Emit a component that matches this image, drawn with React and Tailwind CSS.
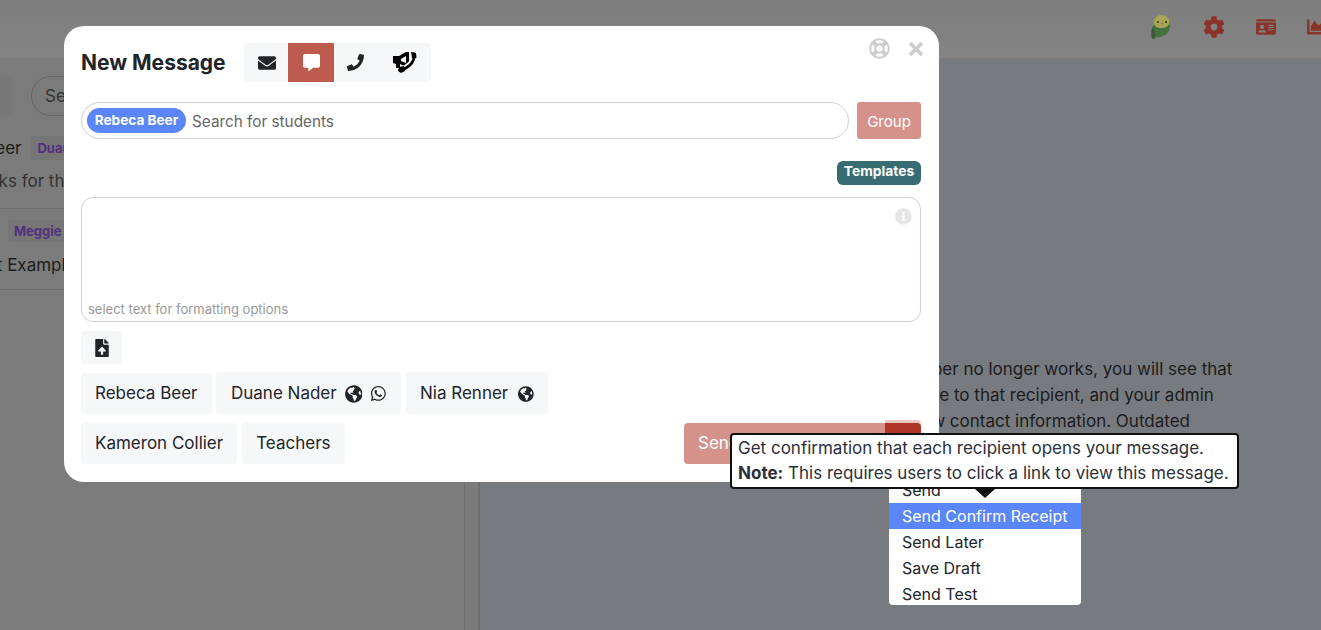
import { FaEnvelope, FaCommentAlt, FaPhone, FaRegLifeRing, FaTimes, FaInfoCircle, FaFileUpload, FaGlobeAmericas, FaWhatsapp, FaCog, FaIdCard, FaChartArea } from 'react-icons/fa';

function Chip({ children, className = '' }) {
  return (
    <div className={`flex h-[41px] items-center gap-2 whitespace-nowrap rounded-[4px] bg-[#f6f7f9] px-[14px] text-[17px] text-[#212529] ${className}`}>
      {children}
    </div>
  );
}

function Parakeet() {
  return (
    <svg width="22" height="26" viewBox="0 0 22 26">
      <path d="M5 10 C1 13 0 19 2 25 L4 25 L6 23 C13 24 20 19 20 12 L18 8 Z" fill="#47703f" />
      <path d="M3 14 C1 17 1 22 3 25 L5 24 C5 20 5 16 3 14 Z" fill="#3a5a36" />
      <path d="M4 9 C4 3 8 1 12 1 C17 1 20 5 19 10 C18 13 14 14 11 14 C7 14 4 12 4 9 Z" fill="#a8a654" />
      <circle cx="8" cy="8" r="1" fill="#2c2c20" />
      <circle cx="16" cy="8" r="1" fill="#2c2c20" />
      <path d="M11 9 h2 l-1 2 z" fill="#7e5a4c" />
    </svg>
  );
}

// megaphone with a phone handset across it
function BroadcastIcon() {
  return (
    <svg width="24" height="21" viewBox="0 0 24 21">
      <path d="M0 4 L6 4 L13 0 L16 0 L16 15 L13 15 L7 12 L7 16 L3 16 L3 12 L0 11 Z" fill="#000" />
      <path d="M8 7 L13 4 L13 11 L8 9 Z" fill="#f6f7f9" />
      <path d="M21 2 C22 9 17 15 8 18" fill="none" stroke="#f6f7f9" strokeWidth="6.5" />
      <path d="M21 2 C22 9 17 15 8 18" fill="none" stroke="#000" strokeWidth="3" strokeLinecap="round" />
      <path d="M18 0 L23 1 L23.5 6 L19 6 Z" fill="#000" />
      <path d="M6 15 L11 14 L12 19 L8 21 L5 19 Z" fill="#000" />
    </svg>
  );
}

function Background() {
  return (
    <div className="flex h-[630px] w-[1321px] flex-col bg-[#7b7b7b]">
      {/* Top bar */}
      <header className="flex h-[58px] shrink-0 items-center justify-end gap-[31px] overflow-hidden bg-gradient-to-b from-[#7e7e7e] to-[#848484] pb-[4px]">
        <Parakeet />
        <FaCog className="text-[22px] text-[#8a3328]" />
        <FaIdCard className="text-[20px] text-[#8a3328]" />
        <FaChartArea className="mr-[-6px] text-[20px] text-[#8a3328]" />
      </header>

      <div className="flex flex-1 overflow-hidden">
        {/* Left list */}
        <div className="w-[465px] shrink-0 overflow-hidden border-r border-[#6f6f6f] text-[17px] text-[#1d1d1d]">
          <div className="mt-[18px] flex h-[40px] gap-[19px]">
            <div className="w-[12px] rounded-r-[6px] bg-[#787878]" />
            <div className="flex w-[300px] items-center rounded-full border border-[#666] pl-[13px] pt-[1px] text-[#333]">Search</div>
          </div>
          <div className="mt-[20px] ml-[-81px] flex h-[24px] items-center gap-[10px] whitespace-nowrap">
            <span className="pt-[2px]">Rebeca Beer</span>
            <span className="rounded-[4px] bg-[#767676] px-[6px] text-[13px] font-bold leading-[24px] text-[#52307f]">Duane Nader</span>
          </div>
          <div className="ml-[-42px] mt-[9px] whitespace-nowrap text-[#333]">Thanks for the update</div>
          <div className="mt-[13px] h-px bg-[#6d6d6d]" />
          <div className="mt-[11px] ml-[8px] h-[22px] w-[120px] rounded-[4px] bg-[#767676] px-[6px] text-[13px] font-bold leading-[22px] text-[#52307f]">Meggie Hand</div>
          <div className="ml-[-32px] mt-[11px] whitespace-nowrap">Text Example message</div>
          <div className="mt-[11px] h-px bg-[#6d6d6d]" />
        </div>
        <div className="w-[13px] shrink-0" />
        <div className="w-[2px] shrink-0 bg-[#6f6f6f]" />

        {/* Right reading pane */}
        <div className="flex-1 whitespace-nowrap bg-[#777a7e] pl-[105px] pt-[298px] text-[17px] leading-[26px] text-[#1b1c1f]">
          <p>If a recipient's email address or phone number no longer works, you will see that</p>
          <p>a warning when you try to send any message to that recipient, and your admin</p>
          <p>team will be called and asked to provide new contact information. Outdated</p>
        </div>
      </div>
    </div>
  );
}

function Modal() {
  const tabClass = 'flex h-full w-[44px] items-center justify-center text-[#212529]';
  return (
    <div className="absolute left-[64px] top-[26px] flex h-[456px] w-[875px] flex-col rounded-[20px] bg-white pl-[17px] pr-[18px] pt-[17px]">
      <div className="flex h-[39px] items-center">
        <h2 className="w-[163px] text-[21px] font-bold text-[#212529]">New Message</h2>
        <div className="flex h-[39px] w-[187px] overflow-hidden rounded-[4px] bg-[#f6f7f9]">
          <div className={tabClass}><FaEnvelope className="ml-[2px] text-[18px]" /></div>
          <div className="flex h-full w-[46px] items-center justify-center bg-[#bd5b4f] text-white"><FaCommentAlt className="text-[17px]" /></div>
          <div className={tabClass}><FaPhone className="mr-[2px] text-[17px]" /></div>
          <div className="flex h-full flex-1 items-center justify-center"><BroadcastIcon /></div>
        </div>
        <div className="mr-[-5px] ml-auto mt-[-5px] flex items-center gap-[16px] self-start text-[#cccccc]">
          <FaRegLifeRing className="text-[21px]" />
          <FaTimes className="text-[20px]" />
        </div>
      </div>

      <div className="mt-[20px] flex gap-[8px]">
        <div className="flex h-[37px] flex-1 items-center rounded-full border border-[#c9d0da] pl-[5px]">
          <span className="flex h-[25px] w-[99px] items-center justify-center rounded-full bg-[#5a86f7] text-[13.6px] font-bold text-white">Rebeca Beer</span>
          <span className="ml-[6px] pt-[3px] text-[15.3px] text-[#666666]">Search for students</span>
        </div>
        <div className="flex h-[37px] w-[64px] items-center justify-center rounded-[3px] bg-[#d5928a] pt-[3px] text-[15px] text-white">Group</div>
      </div>

      <div className="mt-[22px] flex justify-end">
        <div className="flex h-[24px] w-[84px] justify-center rounded-[6px] bg-[#386c73] pt-[2px] text-[13.8px] font-bold leading-[16px] text-white">Templates</div>
      </div>

      <div className="relative mt-[12px] flex h-[125px] items-end rounded-[12px] border border-[#c9d0da] px-[6px] pb-[2px]">
        <FaInfoCircle className="absolute right-[8px] top-[10px] text-[17px] text-[#e6e6e6]" />
        <span className="text-[13px] text-[#999999]">select text for formatting options</span>
      </div>

      <div className="mt-[9px] flex h-[33px] w-[41px] items-center justify-center rounded-[4px] bg-[#f6f7f9] text-[#212529]">
        <FaFileUpload className="text-[18px]" />
      </div>

      <div className="mt-[8px] flex items-end">
        <Chip className="w-[131px]">Rebeca Beer</Chip>
        <Chip className="ml-[4px] h-[42px] w-[185px] pl-[15px] pt-[1px]">
          Duane Nader
          <FaGlobeAmericas className="text-[18px]" />
          <FaWhatsapp className="text-[17px]" />
        </Chip>
        <Chip className="ml-[5px] h-[42px] w-[142px] pt-[1px]">
          Nia Renner
          <FaGlobeAmericas className="ml-[2px] text-[18px]" />
        </Chip>
      </div>

      <div className="mt-[9px] flex gap-[5px]">
        <Chip>Kameron Collier</Chip>
        <Chip>Teachers</Chip>
        <div className="ml-auto flex h-[41px] w-[237px] rounded-[4px] bg-[#d5928a] text-[17px] text-white">
          <span className="flex flex-1 items-center pl-[14px]">Send</span>
          <div className="h-[41px] w-[36px] rounded-r-[4px] bg-[#ad3526] shadow-[0_-3px_0_0_#eac6c0]" />
        </div>
      </div>
    </div>
  );
}

function SendMenu() {
  const items = ['Send Later', 'Save Draft', 'Send Test'];
  return (
    <div className="absolute left-[889px] top-[476px] h-[129px] w-[192px] overflow-hidden rounded-b-[4px] bg-white text-[16px] leading-[26px] text-[#212529]">
      <div className="pl-[13px] pt-[1px]">Send</div>
      <div className="bg-[#5a86f7] pl-[13px] text-white">Send Confirm Receipt</div>
      {items.map((item) => (
        <div key={item} className="pl-[13px]">{item}</div>
      ))}
    </div>
  );
}

function ReceiptTooltip() {
  return (
    <div className="absolute left-[730px] top-[433px] h-[56px] w-[509px] rounded-[4px] border-2 border-[#111111] bg-white px-[6px] py-[1px] text-[17px] leading-[25px] text-[#2b2f3a]">
      <p>Get confirmation that each recipient opens your message.</p>
      <p><b>Note:</b> This requires users to click a link to view this message.</p>
      <div className="absolute left-[243px] top-[54px] h-0 w-0 border-x-[10px] border-t-[9px] border-x-transparent border-t-[#111111]" />
    </div>
  );
}

export default function App() {
  return (
    <div className="relative h-[630px] w-[1321px] overflow-hidden font-['Inter',sans-serif]">
      <Background />
      <Modal />
      <SendMenu />
      <ReceiptTooltip />
    </div>
  );
}
